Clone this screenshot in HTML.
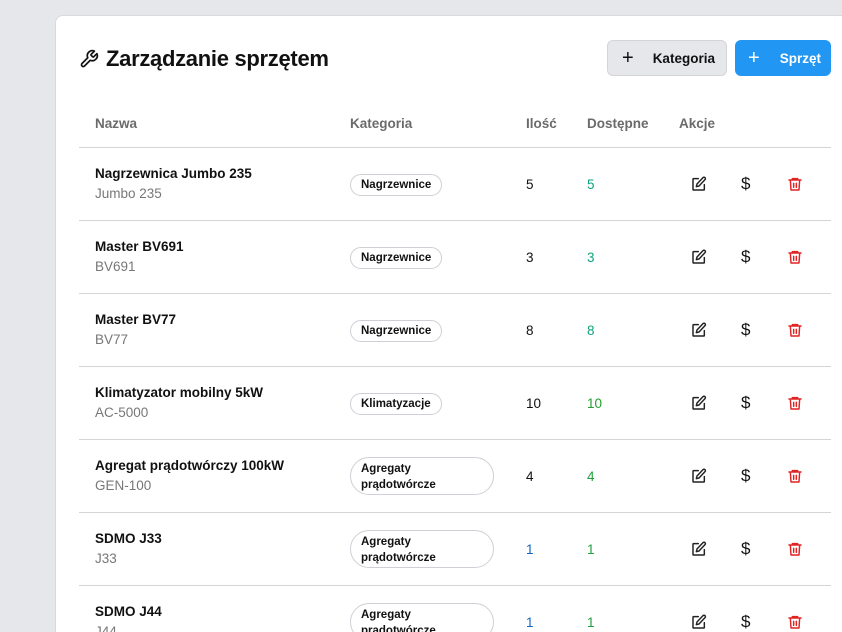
<!DOCTYPE html>
<html><head><meta charset="utf-8"><style>
*{box-sizing:border-box;margin:0;padding:0}
html,body{width:842px;height:632px;overflow:hidden}
body{background:#e5e7eb;font-family:"Liberation Sans",sans-serif;position:relative}
.card{position:absolute;left:55px;top:15px;width:820px;height:640px;background:#fff;border-radius:8px;border:1px solid #d8dae0}
.a{position:absolute;white-space:nowrap}
h1{position:absolute;left:106px;top:46px;font-size:22px;font-weight:700;color:#111;letter-spacing:-0.3px}
.btn{position:absolute;top:40px;height:36px;border-radius:6px;font-size:13.5px;font-weight:700;display:flex;align-items:center}
.th{position:absolute;top:116px;font-size:13.5px;color:#6b6b6b;font-weight:700}
.line{position:absolute;left:79px;width:752px;height:1px;background:#d4d4d8}
.name{font-size:13.5px;font-weight:700;color:#111}
.sub{font-size:13.5px;color:#777}
.pill{position:absolute;left:350px;border:1px solid #cfcfd6;border-radius:12px;font-size:11.5px;font-weight:700;color:#111;padding:3px 10px;line-height:14px}
.pill2{position:absolute;left:350px;width:144px;height:38px;border:1px solid #cfcfd6;border-radius:19px;font-size:11.5px;font-weight:700;color:#111;padding:3px 10px;line-height:16px}
.num{position:absolute;font-size:13.5px}
</style></head><body>
<div class="card"></div>
<svg class="a" style="left:79px;top:49px" width="20" height="20" viewBox="0 0 24 24" fill="none" stroke="#111" stroke-width="2" stroke-linecap="round" stroke-linejoin="round"><path d="M14.7 6.3a1 1 0 0 0 0 1.4l1.6 1.6a1 1 0 0 0 1.4 0l3.77-3.77a6 6 0 0 1-7.94 7.94l-6.910 6.91a2.12 2.12 0 0 1-3-3l6.91-6.91a6 6 0 0 1 7.94-7.94l-3.76 3.76z"/></svg>
<h1>Zarządzanie sprzętem</h1>
<div class="btn" style="left:607px;width:120px;background:#e5e7eb;border:1px solid #d4d4d8;color:#111"><span style="font-size:20px;font-weight:400;margin-left:14px">+</span><span style="margin-left:19px">Kategoria</span></div>
<div class="btn" style="left:735px;width:96px;background:#2196f3;color:#fff"><span style="font-size:20px;font-weight:400;margin-left:13px">+</span><span style="margin-left:20px">Sprzęt</span></div>
<div class="th" style="left:95px">Nazwa</div>
<div class="th" style="left:350px">Kategoria</div>
<div class="th" style="left:526px">Ilość</div>
<div class="th" style="left:587px">Dostępne</div>
<div class="th" style="left:679px">Akcje</div>
<div class="line" style="top:147px"></div>
<div id="rows"></div>
<script>
const d=[["Nagrzewnica Jumbo 235","Jumbo 235","Nagrzewnice",0,"5","5","#111","#10a37f"],
["Master BV691","BV691","Nagrzewnice",0,"3","3","#111","#10a37f"],
["Master BV77","BV77","Nagrzewnice",0,"8","8","#111","#10a37f"],
["Klimatyzator mobilny 5kW","AC-5000","Klimatyzacje",0,"10","10","#111","#22a030"],
["Agregat prądotwórczy 100kW","GEN-100","Agregaty<br>prądotwórcze",1,"4","4","#111","#22a040"],
["SDMO J33","J33","Agregaty<br>prądotwórcze",1,"1","1","#1565c0","#22a040"],
["SDMO J44","J44","Agregaty<br>prądotwórcze",1,"1","1","#1565c0","#22a040"]];
let h="";
d.forEach((r,i)=>{const t=147+i*73;
h+=`<div class="a name" style="left:95px;top:${t+19}px">${r[0]}</div><div class="a sub" style="left:95px;top:${t+39}px">${r[1]}</div>`;
h+=r[3]?`<div class="pill2" style="top:${t+18}px">${r[2]}</div>`:`<div class="pill" style="top:${t+27}px">${r[2]}</div>`;
h+=`<div class="num" style="left:526px;top:${t+30}px;color:${r[6]}">${r[4]}</div><div class="num" style="left:587px;top:${t+30}px;color:${r[7]}">${r[5]}</div>`;
h+=`<svg class="a" style="left:691px;top:${t+29}px" width="16" height="16" viewBox="0 0 24 24" fill="none" stroke="#222" stroke-width="2.2" stroke-linecap="round" stroke-linejoin="round"><path d="M11 4H4a1 1 0 0 0-1 1v15a1 1 0 0 0 1 1h15a1 1 0 0 0 1-1v-7"/><path d="M18 2.5a2.1 2.1 0 0 1 3 3L12 15l-4 1 1-4z"/></svg>`;
h+=`<div class="a" style="left:741px;top:${t+27}px;font-size:17px;color:#111">$</div>`;
h+=`<svg class="a" style="left:787px;top:${t+29}px" width="16" height="16" viewBox="0 0 24 24" fill="none" stroke="#e02424" stroke-width="2.2" stroke-linecap="round" stroke-linejoin="round"><path d="M3 6h18M8 6V4h8v2M5 6l1 15h12l1-15M10 11v6M14 11v6"/></svg>`;
if(i<6)h+=`<div class="line" style="top:${t+73}px"></div>`;});
document.getElementById("rows").innerHTML=h;
</script>
</body></html>
